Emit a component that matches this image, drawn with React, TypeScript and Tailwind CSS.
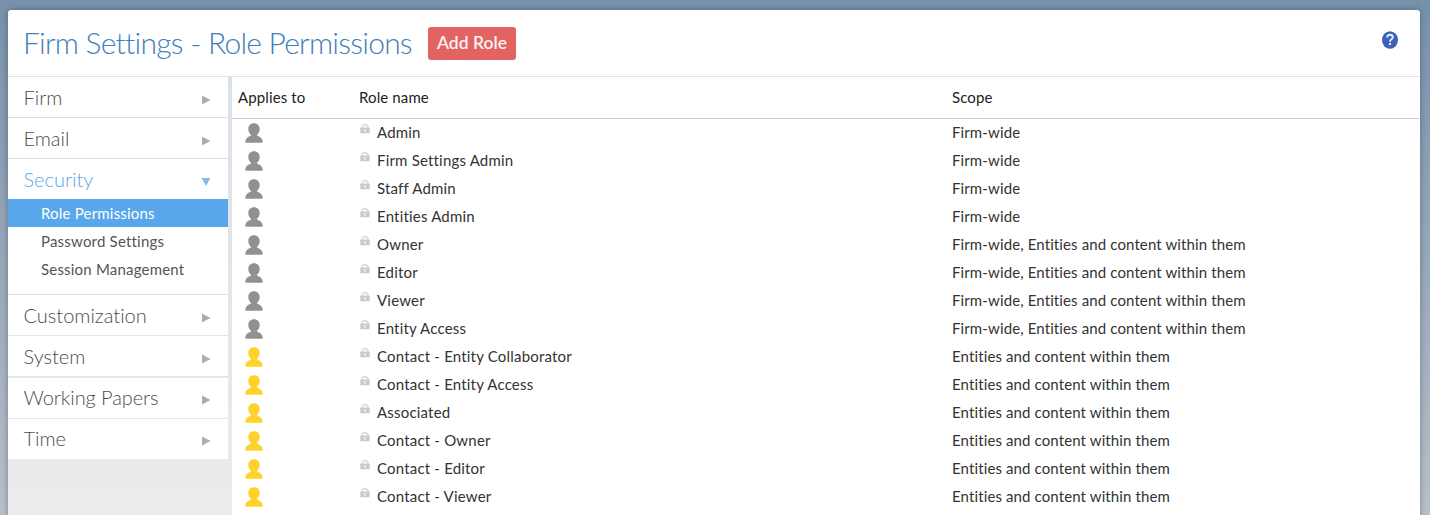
import React from "react";

type MenuItem = {
  label: string;
  open?: boolean;
  border: string;
  row?: string;
  children?: string[];
};

const menu: MenuItem[] = [
  { label: "Firm", border: "border-b border-[#dbe0e6]" },
  { label: "Email", border: "border-b border-[#dbe0e3]" },
  {
    label: "Security",
    open: true,
    border: "border-b border-[#dfe3e7]",
    children: ["Role Permissions", "Password Settings", "Session Management"],
  },
  { label: "Customization", border: "border-b border-[#e0e4e9]" },
  { label: "System", border: "border-b-2 border-[#e3e7eb]" },
  { label: "Working Papers", border: "border-b border-[#e3e6ea]", row: "pb-[2px] tracking-[-0.080px]" },
  { label: "Time", border: "", row: "pb-[2px]" },
];

const FIRM = "Firm-wide";
const ENTITIES = "Entities and content within them";
const BOTH = "Firm-wide, Entities and content within them";

const roles: { name: string; scope: string; contact?: boolean }[] = [
  { name: "Admin", scope: FIRM },
  { name: "Firm Settings Admin", scope: FIRM },
  { name: "Staff Admin", scope: FIRM },
  { name: "Entities Admin", scope: FIRM },
  { name: "Owner", scope: BOTH },
  { name: "Editor", scope: BOTH },
  { name: "Viewer", scope: BOTH },
  { name: "Entity Access", scope: BOTH },
  { name: "Contact - Entity Collaborator", scope: ENTITIES, contact: true },
  { name: "Contact - Entity Access", scope: ENTITIES, contact: true },
  { name: "Associated", scope: ENTITIES, contact: true },
  { name: "Contact - Owner", scope: ENTITIES, contact: true },
  { name: "Contact - Editor", scope: ENTITIES, contact: true },
  { name: "Contact - Viewer", scope: ENTITIES, contact: true },
];

function Person({ contact }: { contact?: boolean }) {
  return (
    <svg
      width="18"
      height="20"
      viewBox="0 0 18 20"
      className={contact ? "fill-[#ffd22b]" : "fill-[#919191]"}
    >
      <path d="M9 0.200C5.500.2 3.300 2.500 3.300 6c0 2.500 1 4.300 2.500 5.500.3.900-.2 1.300-1.200 1.800C2.200 14.400.6 15.500.300 18.500c0 .9.3 1.300 1.200 1.300h15c.9 0 1.200-.4 1.200-1.300-.3-3-1.900-4.100-4.300-5.200-1-.5-1.500-.9-1.200-1.800C13.700 10.300 14.700 8.500 14.700 6 14.700 2.500 12.500.2 9 .2z" />
    </svg>
  );
}

function Lock() {
  return (
    <svg width="10" height="10" viewBox="0 0 10 10">
      <path d="M2 5V3C2 1.400 3 .7 5 .7S8 1.400 8 3v2" fill="none" stroke="#d8d8d8" strokeWidth="1.400" />
      <rect x="0.300" y="3.600" width="9.400" height="5.600" rx="0.700" fill="#cbcbcb" />
      <path d="M4.300 5h1.400v2.800H4.300z" fill="#f4f4f4" />
    </svg>
  );
}

function Arrow({ open }: { open?: boolean }) {
  return open ? (
    <svg width="10" height="10" viewBox="0 0 10 10" className="relative top-[3px]">
      <path d="M0.500 1h9L5 9z" fill="#7fbdf0" />
    </svg>
  ) : (
    <svg width="10" height="10" viewBox="0 0 10 10" className="relative top-[3px]">
      <path d="M1 0.500l8.500 4.500-8.500 4.500z" fill="#adadad" />
    </svg>
  );
}

function Sidebar() {
  return (
    <nav className="w-[224px] shrink-0 bg-gradient-to-b from-[#d9e1e9] via-[#e2e6eb] to-[#ebeced] pr-1">
      {menu.map((item) => (
        <div key={item.label} className={`bg-white ${item.border}`}>
          <div
            className={`flex h-10 items-center justify-between pl-[15.500px] pr-[17px] text-[20px] font-light ${
              item.open ? "text-[#57a7ea]" : "text-[#4d4d4d]"
            } ${item.row ?? ""}`}
          >
            <span>{item.label}</span>
            <Arrow open={item.open} />
          </div>
          {item.children && (
            <ul className="pb-[11px]">
              {item.children.map((child, i) => (
                <li
                  key={child}
                  className={`h-7 pl-[33px] text-[15px] leading-[28px] tracking-[0.200px] ${
                    i === 0 ? "bg-[#57a7ea] text-white" : "text-[#555555]"
                  }`}
                >
                  {child}
                </li>
              ))}
            </ul>
          )}
        </div>
      ))}
    </nav>
  );
}

export default function App() {
  return (
    <div className="h-[515px] overflow-hidden bg-gradient-to-b from-[#7791ab] to-[#b8bfc8] pl-[8px] pr-[10px] pt-[10px] font-['Lato',sans-serif] [font-variant-ligatures:none]">
      <div className="flex h-[560px] flex-col overflow-hidden rounded-t-[3px] bg-white shadow-[0_0_6px_rgba(0,0,0,0.3)]">
        <header className="flex h-[67px] shrink-0 items-center border-b border-[#e1e3e5] pl-[15px] pr-[22px]">
          <h1 className="w-[389px] whitespace-nowrap pb-0.5 text-[30px] font-light tracking-[-0.760px] text-[#4080b8]">
            Firm Settings - Role Permissions
          </h1>
          <button className="ml-4 h-[33px] w-[88px] whitespace-nowrap rounded-[3px] bg-[#e36363] text-[17.500px] font-semibold text-[#fdf0f0]">
            Add Role
          </button>
          <svg width="16" height="18" viewBox="0 0 16 18" className="relative -top-[3px] ml-auto">
            <ellipse cx="8" cy="9" rx="8" ry="8.800" fill="#3b62b5" />
            <path
              d="M5.200 6.500C5.300 4.600 6.400 3.800 8 3.800s2.800.9 2.800 2.500C10.800 8.300 8 8.300 8 10.700"
              fill="none"
              stroke="#e9eef8"
              strokeWidth="1.900"
            />
            <rect x="7" y="12" width="2" height="2" fill="#e9eef8" />
          </svg>
        </header>
        <div className="flex h-[438px] shrink-0">
          <Sidebar />
          <main className="min-w-0 flex-1 pr-px text-[15px] tracking-[0.120px]">
            <div className="grid h-[42px] grid-cols-[121px_593px_1fr] items-center border-b border-[#c8c8c8] pl-1.5 text-[#222222]">
              <span>Applies to</span>
              <span>Role name</span>
              <span>Scope</span>
            </div>
            {roles.map((role) => (
              <div
                key={role.name}
                className="grid h-7 grid-cols-[121px_593px_1fr] pl-1.5 leading-[26px] text-[#333333]"
              >
                <div className="pl-[7px] pt-1">
                  <Person contact={role.contact} />
                </div>
                <div className="flex">
                  <div className="w-[18px] pl-px pt-[5px]">
                    <Lock />
                  </div>
                  <span className="tracking-[0.190px]">{role.name}</span>
                </div>
                <span>{role.scope}</span>
              </div>
            ))}
          </main>
        </div>
      </div>
    </div>
  );
}
